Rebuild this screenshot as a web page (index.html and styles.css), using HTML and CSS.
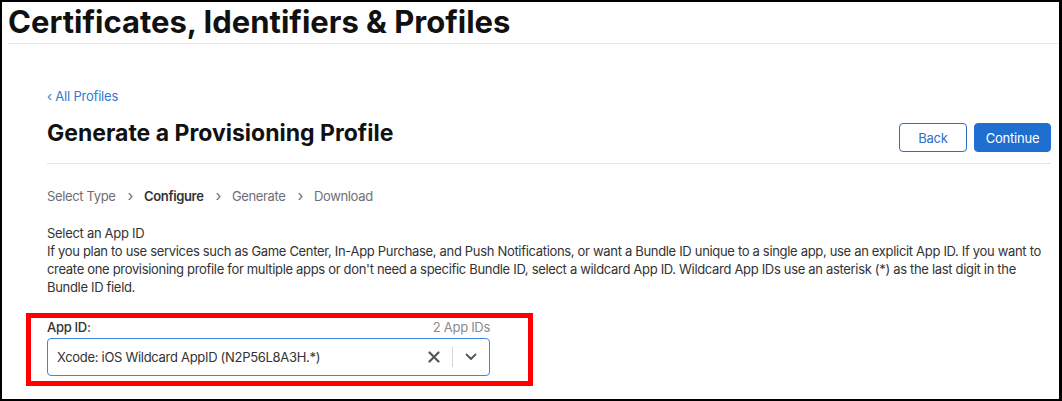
FILE: index.html
```html
<!DOCTYPE html>
<html>
<head>
<meta charset="utf-8">
<link rel="stylesheet" href="styles.css">
</head>
<body>
<div class="frame">
  <header class="site-head">
    <h1 class="site-title">Certificates, Identifiers &amp; Profiles</h1>
  </header>
  <main class="content">
    <a class="back-link" href="#"><span class="lt">‹</span> All Profiles</a>
    <div class="page-head">
      <h2 class="page-title">Generate a Provisioning Profile</h2>
      <div class="actions">
        <button class="btn btn-outline">Back</button>
        <button class="btn btn-primary">Continue</button>
      </div>
    </div>
    <nav class="steps">
      <span>Select Type</span><span class="sep">›</span>
      <span class="current">Configure</span><span class="sep">›</span>
      <span>Generate</span><span class="sep">›</span>
      <span>Download</span>
    </nav>
    <section class="intro">
      <div class="intro-title">Select an App ID</div>
      <p class="intro-text">If you plan to use services such as Game Center, In-App Purchase, and Push Notifications, or want a Bundle ID unique to a single app, use an explicit App ID. If you want to create one provisioning profile for multiple apps or don't need a specific Bundle ID, select a wildcard App ID. Wildcard App IDs use an asterisk (*) as the last digit in the Bundle ID field.</p>
    </section>
    <div class="highlight">
      <div class="field">
        <div class="field-head">
          <label class="field-label">App ID:</label>
          <span class="field-count">2 App IDs</span>
        </div>
        <div class="select">
          <span class="select-value">Xcode: iOS Wildcard AppID (N2P56L8A3H.*)</span>
          <span class="select-icons">
            <svg class="ic-clear" width="12" height="12" viewBox="0 0 12 12"><path d="M1.5 1.5 L10.5 10.5 M10.5 1.5 L1.5 10.5" stroke="#555" stroke-width="2.2" stroke-linecap="round"/></svg>
            <span class="divider"></span>
            <svg class="ic-chev" width="12" height="8" viewBox="0 0 12 8"><path d="M1.5 1.5 L6 6 L10.5 1.5" stroke="#555" stroke-width="1.8" fill="none" stroke-linecap="round" stroke-linejoin="round"/></svg>
          </span>
        </div>
      </div>
    </div>
  </main>
</div>
</body>
</html>
```

FILE: styles.css
```css
* { box-sizing: border-box; }
html, body { margin: 0; padding: 0; background: #fff; }
body { font-family: Inter, "Noto Sans", "Liberation Sans", sans-serif; color: #333; }

.frame {
  width: 1062px;
  height: 401px;
  border-style: solid;
  border-color: #000;
  border-width: 2px 3px 2px 2px;
  overflow: hidden;
  background: #fff;
}

.site-head {
  margin-left: 6px;
  height: 42px;
  border-bottom: 1px solid #e8e8e8;
}
.site-title {
  margin: 0;
  font-size: 31px;
  font-weight: 700;
  line-height: 40px;
  color: #111;
}

.content {
  padding: 44px 8px 0 45px;
}

.back-link {
  display: block;
  font-size: 13px;
  line-height: 16px;
  color: #2f7bd6;
  text-decoration: none;
  letter-spacing: -0.2px;
}

.page-head {
  display: flex;
  justify-content: space-between;
  align-items: flex-end;
  margin-top: 10px;
  padding-bottom: 11px;
  border-bottom: 1px solid #e5e5e5;
}
.page-title {
  margin: 0;
  font-size: 23px;
  font-weight: 700;
  line-height: 38px;
  color: #111;
}
.actions { display: flex; gap: 7px; }
.btn {
  font-family: inherit;
  font-size: 13px;
  height: 29px;
  border-radius: 4px;
  cursor: pointer;
  letter-spacing: -0.2px;
}
.btn-outline {
  width: 68px;
  background: #fff;
  color: #2f6fc4;
  border: 1px solid #2f6fc4;
}
.btn-primary {
  width: 77px;
  background: #1f6fd0;
  color: #fff;
  border: 1px solid #1f6fd0;
}

.steps {
  margin-top: 23px;
  font-size: 13px;
  line-height: 18px;
  color: #6e6e73;
  display: flex;
  letter-spacing: -0.35px;
}
.steps .sep { margin: 0 11px 0 12px; font-size: 15px; line-height: 17px; }
.steps .current { color: #333; font-weight: 600; }

.intro { margin-top: 19px; }
.intro-title { font-size: 13px; line-height: 18px; color: #333; letter-spacing: -0.3px; }
.intro-text {
  margin: 0;
  font-size: 13px;
  line-height: 18px;
  color: #333;
  letter-spacing: -0.32px;
}

.highlight {
  margin: 17px 0 0 -21px;
  width: 507px;
  height: 73px;
  border: 5px solid #ff0000;
  padding: 1px 0 0 16px;
}
.field { width: 443px; }
.field-head {
  display: flex;
  justify-content: space-between;
  align-items: flex-end;
  height: 16px;
  letter-spacing: -0.3px;
}
.field-label { font-size: 13px; color: #333; font-weight: 500; }
.field-count { font-size: 13px; color: #8a8a8e; }
.select {
  margin-top: 3px;
  height: 38px;
  border: 1.5px solid #3c87e0;
  border-radius: 4px;
  display: flex;
  align-items: center;
  justify-content: space-between;
  padding: 0 12px 0 9px;
}
.select-value { font-size: 13px; color: #333; letter-spacing: -0.3px; }
.select-icons { display: flex; align-items: center; }
.divider {
  width: 1px;
  height: 20px;
  background: #d6d6d6;
  margin: 0 12px 0 12px;
}
```
